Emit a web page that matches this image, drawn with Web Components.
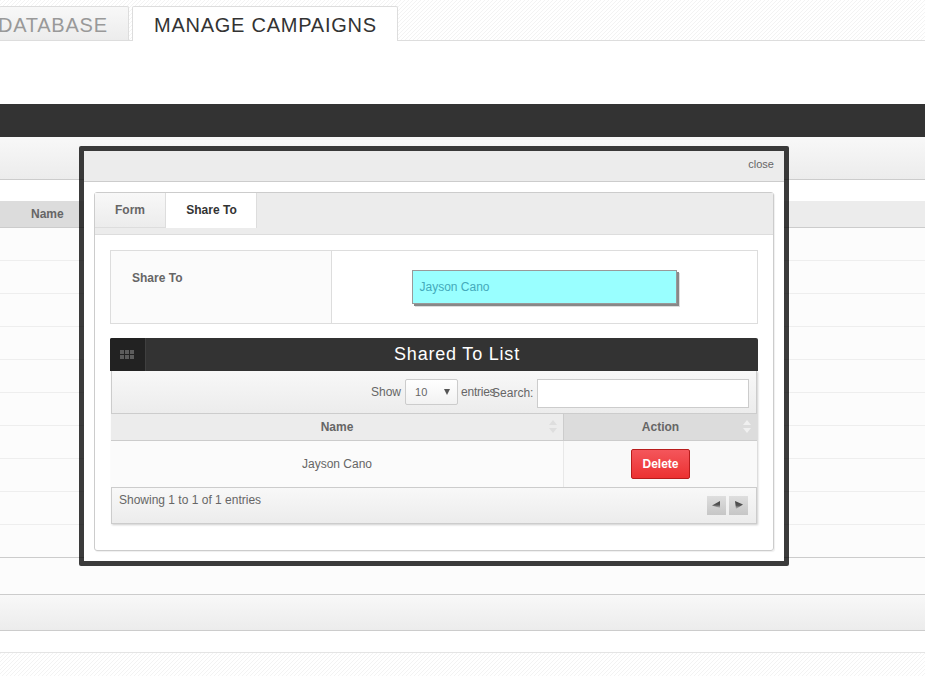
<!DOCTYPE html>
<html>
<head>
<meta charset="utf-8">
<title>Manage Campaigns</title>
<style>
  html, body { margin: 0; padding: 0; height: 676px; overflow: hidden; background: #fff; }
  body { font-family: "Liberation Sans", Arial, sans-serif; }
</style>
</head>
<body>
<campaign-page>
  <share-modal></share-modal>
</campaign-page>

<script>
class CampaignTabs extends HTMLElement {
  constructor() {
    super();
    this.attachShadow({ mode: "open" });
  }

  connectedCallback() {
    this.shadowRoot.innerHTML = /* html */`
    <style>
      :host {
        display: flex;
        align-items: flex-start;
        gap: 3px;
        height: 41px;
        box-sizing: border-box;
        padding-top: 6px;
        font-size: 20px;
        letter-spacing: 0.75px;
        background: repeating-linear-gradient(135deg, #f3f3f3 0 1px, #fff 1px 2.830px);
        border-bottom: 1px solid #ddd;
      }
      .tab {
        box-sizing: border-box;
        line-height: 37px;
        border: 1px solid #ddd;
        border-bottom: 0;
        border-radius: 2px 2px 0 0;
        white-space: nowrap;
      }
      .off {
        width: 130px;
        height: 34px;
        margin-left: -1px;
        color: #999;
        background: linear-gradient(#f8f8f8, #ececec);
        text-indent: -2px;
        overflow: hidden;
      }
      .on {
        width: 266px;
        height: 35px;
        padding-left: 21px;
        color: #333;
        background: #fff;
      }
    </style>
    <div class="tab off">DATABASE</div>
    <div class="tab on">MANAGE CAMPAIGNS</div>`;
  }
}

class CampaignPage extends HTMLElement {
  constructor() {
    super();
    this.attachShadow({ mode: "open" });
  }

  connectedCallback() {
    const rows = Array.from({ length: 10 }, () => `<div class="row"></div>`).join("");
    this.shadowRoot.innerHTML = /* html */`
    <style>
      :host {
        display: block;
        position: relative;
        height: 676px;
        overflow: hidden;
      }
      .gap { height: 63px; }
      .bar { height: 33px; background: #333; }
      .toolbar {
        height: 42px;
        background: linear-gradient(#f8f8f8, #ececec);
        border-bottom: 1px solid #ccc;
      }
      .spacer { height: 21px; }
      .head {
        display: grid;
        grid-template-columns: 79px 1fr;
        height: 26px;
        background: #ececec;
        border-bottom: 1px solid #ccc;
        color: #666;
        font-size: 12px;
        font-weight: bold;
      }
      .head div {
        background: #dcdcdc;
        line-height: 26px;
        padding-left: 31px;
      }
      .row {
        height: 32px;
        background: #fcfcfc;
        border-bottom: 1px solid #eee;
      }
      .row:last-child { border-bottom-color: #ccc; }
      .pad { height: 36px; background: #fcfcfc; border-bottom: 1px solid #ccc; }
      .foot {
        height: 35px;
        background: linear-gradient(#f8f8f8, #ececec);
        border-bottom: 1px solid #ccc;
      }
      .white { height: 21px; border-bottom: 1px solid #e4e4e4; }
      .texture {
        height: 24px;
        background: repeating-linear-gradient(135deg, #f3f3f3 0 1px, #fff 1px 2.830px);
      }
    </style>
    <campaign-tabs></campaign-tabs>
    <div class="gap"></div>
    <div class="bar"></div>
    <div class="toolbar"></div>
    <div class="spacer"></div>
    <div class="head"><div>Name</div></div>
    <div class="rows">${rows}</div>
    <div class="pad"></div>
    <div class="foot"></div>
    <div class="white"></div>
    <div class="texture"></div>
    <slot></slot>`;
  }
}

class ShareForm extends HTMLElement {
  constructor() {
    super();
    this.attachShadow({ mode: "open" });
  }

  connectedCallback() {
    this.shadowRoot.innerHTML = /* html */`
    <style>
      :host {
        display: grid;
        grid-template-columns: 221px 1fr;
        height: 74px;
        box-sizing: border-box;
        border: 1px solid #ddd;
        font-size: 12px;
      }
      .label {
        background: #fbfbfb;
        border-right: 1px solid #ddd;
        padding: 20px 0 0 21px;
        font-weight: bold;
        color: #666;
      }
      .field {
        padding: 19px 0 0 80px;
      }
      .picked {
        width: 265px;
        height: 34px;
        box-sizing: border-box;
        background: #99ffff;
        border: 1px solid #999;
        box-shadow: 2px 2px 0 #888, 3px 3px 0 #ddd;
        color: #44aabb;
        line-height: 32px;
        padding-left: 6.500px;
      }
    </style>
    <div class="label">Share To</div>
    <div class="field"><div class="picked">Jayson Cano</div></div>`;
  }
}

class SharedList extends HTMLElement {
  constructor() {
    super();
    this.attachShadow({ mode: "open" });
  }

  connectedCallback() {
    const sort = /* html */`
      <svg class="sort" width="8" height="13" viewBox="0 0 8 13">
        <path d="M4 0 8 5H0zM0 8H8L4 13z" fill="currentColor"/>
      </svg>`;
    this.shadowRoot.innerHTML = /* html */`
    <style>
      :host {
        display: block;
        font-size: 12px;
        color: #666;
      }
      .title {
        display: flex;
        height: 33px;
        background: #333;
        border-radius: 2px 2px 0 0;
        overflow: hidden;
      }
      .grip {
        width: 36px;
        flex: none;
        box-sizing: border-box;
        background: #222;
        border-right: 1px solid #3f3f3f;
        display: flex;
        align-items: center;
        justify-content: center;
        padding-right: 2px;
      }
      h2 {
        flex: 1;
        margin: 0;
        padding-left: 10px;
        text-align: center;
        color: #fff;
        font-size: 18px;
        font-weight: normal;
        letter-spacing: 0.8px;
        line-height: 32px;
      }
      .body {
        box-shadow: 1px 1px 2px #0003;
        margin: 0 0 0 1px;
        width: 646px;
      }
      .filter {
        height: 43px;
        box-sizing: border-box;
        background: linear-gradient(#f8f8f8, #ececec);
        border: 1px solid #ccc;
        border-width: 0 1px 1px 1px;
        display: flex;
        align-items: flex-start;
        padding: 8px 0 0 259px;
      }
      .filter span { line-height: 26px; white-space: nowrap; }
      .select {
        box-sizing: border-box;
        width: 53px;
        height: 26px;
        margin: 0 3px 0 4px;
        background: linear-gradient(#fff, #f2f2f2);
        border: 1px solid #ccc;
        border-radius: 2px;
        display: flex;
        align-items: center;
        justify-content: space-between;
        padding: 0 7px 0 9px;
        font-size: 11px;
      }
      .caret {
        width: 0;
        height: 0;
        border: 3.500px solid transparent;
        border-top: 6px solid #555;
        border-bottom: 0;
      }
      .entries { width: 31px; letter-spacing: -0.25px; }
      .searchlabel { margin-top: 1px; }
      .search {
        box-sizing: border-box;
        width: 212px;
        height: 29px;
        margin-left: 4px;
        background: #fff;
        border: 1px solid #ccc;
      }
      .cols {
        display: grid;
        grid-template-columns: 453px 1fr;
      }
      .th {
        position: relative;
        height: 27px;
        box-sizing: border-box;
        border-bottom: 1px solid #ccc;
        text-align: center;
        font-weight: bold;
        line-height: 26px;
      }
      .sort { position: absolute; right: 6px; top: 6px; }
      .th.name { background: #ececec; border-right: 1px solid #ccc; color: #666; }
      .th.action { background: #dcdcdc; }
      .th.name .sort { color: #dedede; }
      .th.action .sort { color: #f0f0f0; }
      .td {
        height: 46px;
        background: #fbfbfb;
        box-sizing: border-box;
        display: flex;
        align-items: center;
        justify-content: center;
      }
      .td.name { border-right: 1px solid #e8e8e8; }
      .td.action { background: #f9f9f9; }
      .delete {
        box-sizing: border-box;
        width: 59px;
        height: 30px;
        border: 1px solid #b81c1c;
        border-radius: 2px;
        background: linear-gradient(#f4565b, #ec3131);
        color: #fff;
        font-weight: bold;
        text-align: center;
        line-height: 29px;
      }
      .foot {
        height: 37px;
        box-sizing: border-box;
        background: linear-gradient(#f8f8f8, #ececec);
        border: 1px solid #ccc;
        padding: 5px 0 0 7px;
        display: flex;
        justify-content: space-between;
        align-items: flex-start;
      }
      .pager { display: flex; gap: 3px; padding: 3px 8px 0 0; }
      .pager svg {
        display: block;
        background: linear-gradient(#dedede, #c6c6c6);
      }
    </style>
    <div class="title">
      <div class="grip">
        <svg width="14" height="9" viewBox="0 0 14 9" fill="#5c5c5c">
          <path d="M0 0h4v4H0zM5 0h4v4H5zM10 0h4v4h-4zM0 5h4v4H0zM5 5h4v4H5zM10 5h4v4h-4z"/>
        </svg>
      </div>
      <h2>Shared To List</h2>
    </div>
    <div class="body">
      <div class="filter">
        <span>Show</span>
        <div class="select">10<i class="caret"></i></div>
        <span class="entries">entries</span>
        <span class="searchlabel">Search:</span>
        <div class="search"></div>
      </div>
      <div class="cols">
        <div class="th name">Name${sort}</div>
        <div class="th action">Action${sort}</div>
        <div class="td name">Jayson Cano</div>
        <div class="td action"><div class="delete">Delete</div></div>
      </div>
      <div class="foot">
        <div>Showing 1 to 1 of 1 entries</div>
        <div class="pager">
          <svg width="19" height="19" viewBox="0 0 19 19">
            <defs>
              <linearGradient id="fade" x1="0" y1="0" x2="0" y2="1">
                <stop offset="0" stop-color="#444"/>
                <stop offset="0.55" stop-color="#555"/>
                <stop offset="1" stop-color="#555" stop-opacity="0.1"/>
              </linearGradient>
            </defs>
            <path d="M5 9.500 13 5V12z" fill="url(#fade)"/>
          </svg>
          <svg width="19" height="19" viewBox="0 0 19 19">
            <path d="M6 5 14 8.500 7 13z" fill="url(#fade)"/>
          </svg>
        </div>
      </div>
    </div>`;
  }
}

class ShareModal extends HTMLElement {
  constructor() {
    super();
    this.attachShadow({ mode: "open" });
  }

  connectedCallback() {
    this.shadowRoot.innerHTML = /* html */`
    <style>
      :host {
        display: block;
        position: absolute;
        left: 79px;
        top: 146px;
        width: 710px;
        height: 420px;
        box-sizing: border-box;
        border: 5px solid rgba(0, 0, 0, 0.77);
        border-radius: 2px;
        background: #fff;
        background-clip: padding-box;
        font-size: 12px;
      }
      .top {
        height: 30px;
        background: #ececec;
        border-bottom: 1px solid #ccc;
        color: #666;
        font-size: 11px;
        line-height: 27px;
        text-align: right;
        padding-right: 10px;
      }
      .panel {
        margin: 10px 10px 0;
        height: 359px;
        box-sizing: border-box;
        border: 1px solid #ccc;
        border-radius: 3px;
        box-shadow: 1px 1px 1px #0001;
      }
      nav {
        display: flex;
        height: 42px;
        box-sizing: border-box;
        background: #ececec;
        border-bottom: 1px solid #ddd;
        font-weight: bold;
        color: #666;
      }
      nav div {
        height: 35px;
        box-sizing: border-box;
        text-align: center;
        line-height: 35px;
      }
      .form-tab {
        width: 71px;
        background: linear-gradient(#f8f8f8, #ececec);
        border-right: 1px solid #ddd;
        border-bottom: 1px solid #ddd;
      }
      .share-tab {
        width: 91px;
        padding-left: 1px;
        background: #fff;
        color: #333;
        border-right: 1px solid #ddd;
      }
      .content {
        padding: 15px 15px 0;
      }
      shared-list { margin-top: 14px; }
    </style>
    <div class="top">close</div>
    <div class="panel">
      <nav>
        <div class="form-tab">Form</div>
        <div class="share-tab">Share To</div>
      </nav>
      <div class="content">
        <share-form></share-form>
        <shared-list></shared-list>
      </div>
    </div>`;
  }
}

customElements.define("campaign-tabs", CampaignTabs);
customElements.define("campaign-page", CampaignPage);
customElements.define("share-form", ShareForm);
customElements.define("shared-list", SharedList);
customElements.define("share-modal", ShareModal);
</script>
</body>
</html>
